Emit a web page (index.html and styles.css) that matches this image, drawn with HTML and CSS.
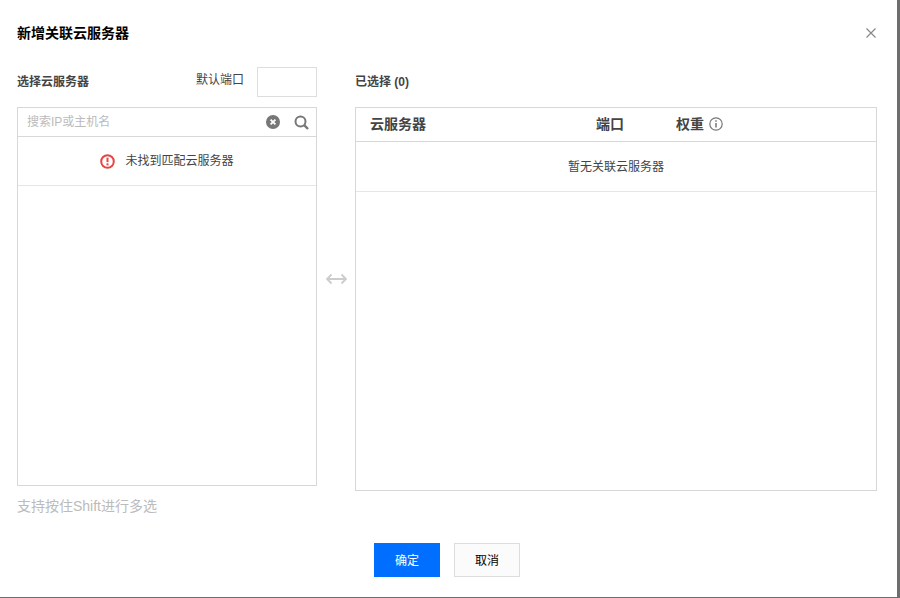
FILE: index.html
```html
<!DOCTYPE html>
<html lang="zh">
<head>
<meta charset="utf-8">
<title>新增关联云服务器</title>
<link rel="stylesheet" href="styles.css">
</head>
<body>
<div class="dialog">
  <header class="dialog-head">
    <h1 class="dialog-title">新增关联云服务器</h1>
    <svg class="close" viewBox="0 0 10 10" width="10" height="10"><path d="M.5.5l9 9M9.500.5l-9 9" stroke="#888" stroke-width="1.200" fill="none"/></svg>
  </header>
  <div class="transfer">
    <section class="left">
      <div class="left-top">
        <span class="label">选择云服务器</span>
        <span class="port-label">默认端口</span>
        <span class="port-input"></span>
      </div>
      <div class="panel left-panel">
        <div class="search">
          <span class="placeholder">搜索IP或主机名</span>
          <svg class="clear" viewBox="0 0 14 14" width="14" height="14"><circle cx="7" cy="7" r="7" fill="#777"/><path d="M4.600 4.600l4.800 4.800M9.400 4.600l-4.800 4.800" stroke="#fff" stroke-width="1.800"/></svg>
          <svg class="mag" viewBox="0 0 15 15" width="15" height="15"><circle cx="6.500" cy="6.500" r="5" fill="none" stroke="#777" stroke-width="2"/><path d="M10.200 10.200l3.800 3.800" stroke="#777" stroke-width="2.400"/></svg>
        </div>
        <div class="message">
          <svg class="warn" viewBox="0 0 15 15" width="15" height="15"><circle cx="7.500" cy="7.500" r="6.300" fill="none" stroke="#e54545" stroke-width="2"/><path d="M7.500 3.600v4.600" stroke="#e54545" stroke-width="2"/><path d="M7.500 9.400v2" stroke="#e54545" stroke-width="2"/></svg>
          <span>未找到匹配云服务器</span>
        </div>
      </div>
      <p class="hint">支持按住Shift进行多选</p>
    </section>
    <div class="swap">
      <svg viewBox="0 0 21 12" width="21" height="12"><path d="M1 6h19M5.500 1.500L1 6l4.500 4.500M15.500 1.500L20 6l-4.500 4.500" fill="none" stroke="#ccc" stroke-width="1.800"/></svg>
    </div>
    <section class="right">
      <div class="right-top"><span class="label">已选择 (0)</span></div>
      <div class="panel right-panel">
        <div class="table-head">
          <span class="col-name">云服务器</span>
          <span class="col-port">端口</span>
          <span class="col-weight">权重</span>
          <svg class="info" viewBox="0 0 14 14" width="14" height="14"><circle cx="7" cy="7" r="6.200" fill="none" stroke="#777" stroke-width="1.200"/><path d="M7 6v4.600" stroke="#777" stroke-width="1.500"/><path d="M7 3.200v1.500" stroke="#777" stroke-width="1.500"/></svg>
        </div>
        <div class="empty">暂无关联云服务器</div>
      </div>
    </section>
  </div>
  <footer class="actions">
    <button class="btn primary" type="button">确定</button>
    <button class="btn" type="button">取消</button>
  </footer>
</div>
</body>
</html>
```
FILE: styles.css
```css
* { box-sizing: border-box; }
html, body { margin: 0; height: 100%; }
body {
  width: 900px;
  height: 598px;
  overflow: hidden;
  background: #6e6e6e;
  font-family: "Liberation Sans", "Noto Sans CJK SC", sans-serif;
  font-size: 12px;
  color: #444;
}
.dialog {
  width: 897px;
  height: 597px;
  background: #fff;
  padding: 0 20px 0 17px;
  display: flex;
  flex-direction: column;
}
.dialog-head {
  height: 67px;
  display: flex;
  justify-content: space-between;
  align-items: flex-start;
  padding-top: 24px;
}
.dialog-title {
  margin: 0;
  font-size: 14px;
  line-height: 18px;
  font-weight: 700;
  color: #000;
}
.close { margin: 4px 1px 0 0; flex: none; }
.transfer { display: flex; height: 450px; }
.left { width: 300px; }
.left-top {
  height: 40px;
  display: flex;
  align-items: flex-start;
}
.label {
  display: block;
  font-weight: 700;
  line-height: 18px;
  margin-top: 6px;
  color: #444;
}
.port-label {
  margin-left: auto;
  margin-top: 4px;
  line-height: 18px;
  color: #444;
}
.port-input {
  width: 60px;
  height: 30px;
  margin-left: 13px;
  border: 1px solid #ddd;
}
.panel { border: 1px solid #d8d8d8; }
.left-panel { height: 379px; }
.search {
  height: 29px;
  border-bottom: 1px solid #d8d8d8;
  display: flex;
  align-items: center;
  padding: 0 7px 0 9px;
}
.placeholder { color: #bbb; flex: 1; padding-bottom: 3px; }
.clear { margin-right: 14px; }
.message {
  height: 49px;
  border-bottom: 1px solid #e5e5e5;
  display: flex;
  align-items: center;
  justify-content: center;
  gap: 10px;
  color: #444;
}
.message span { padding-bottom: 3px; }
.hint {
  margin: 11px 0 0;
  font-size: 14px;
  line-height: 18px;
  color: #bbb;
}
.swap {
  width: 38px;
  display: flex;
  justify-content: center;
  padding-top: 206px;
}
.right { width: 522px; }
.right-top { height: 40px; display: flow-root; }
.right-panel { height: 384px; }
.table-head {
  height: 34px;
  border-bottom: 1px solid #d8d8d8;
  display: flex;
  align-items: center;
  padding-bottom: 4px;
  font-size: 14px;
  font-weight: 700;
  color: #444;
}
.col-name { margin-left: 14px; width: 226px; }
.col-port { width: 80px; }
.info { margin-left: 5px; margin-top: 3px; }
.empty {
  height: 50px;
  border-bottom: 1px solid #e5e5e5;
  display: flex;
  align-items: center;
  justify-content: center;
  padding-bottom: 2px;
  color: #444;
}
.actions {
  display: flex;
  justify-content: flex-start;
  gap: 14px;
  margin-top: 26px;
  padding-left: 357px;
}
.btn {
  width: 66px;
  height: 34px;
  padding: 0 0 2px;
  border: 1px solid #ddd;
  background: #fbfbfb;
  color: #000;
  font: inherit;
}
.primary {
  background: #006eff;
  border-color: #006eff;
  color: #fff;
}
```
